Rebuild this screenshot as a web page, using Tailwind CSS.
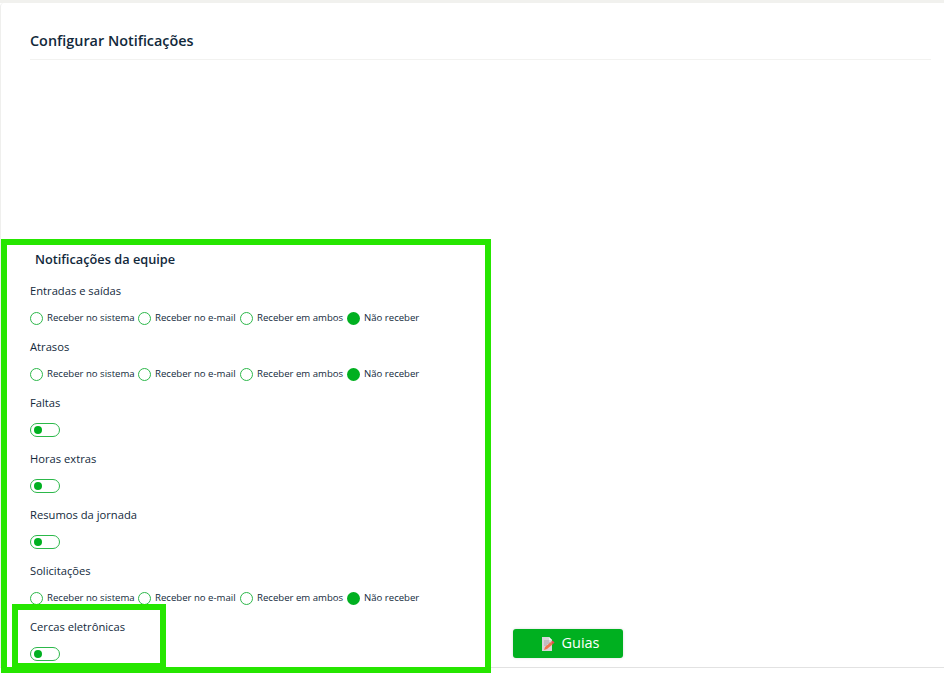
<!DOCTYPE html>
<html lang="pt-BR">
<head>
    <meta charset="UTF-8">
    <meta name="viewport" content="width=device-width, initial-scale=1.0">
    <script src="https://cdn.jsdelivr.net/npm/@tailwindcss/browser@4"></script>
    <title>Configurar Notificações</title>
</head>
<body class="bg-white font-['Open_Sans',sans-serif] text-[#12293b] overflow-hidden">
<div class="relative w-[944px] h-[675px] overflow-hidden">
    <div class="h-[3px] bg-[#f1f1ee]"></div>

    <!-- Card -->
    <div class="h-[665px] border-l border-b border-l-[#efefed] border-b-[#e2e2e2] rounded-tl-[4px] pl-[29px] pr-[13px] pt-[27px]">
        <h2 class="h-[30px] border-b border-[#f2f2f0] text-[14.4px] leading-[22px] font-semibold">Configurar Notificações</h2>

        <div class="flex h-[607px]">
            <div class="w-[483px] pt-[189px]">
                <h3 class="pl-[5px] text-[12.75px] leading-[20px] font-semibold">Notificações da equipe</h3>

                <div class="mt-[14px] flex flex-col">
                    <!-- Entradas e saídas -->
                    <div class="h-[56px]">
                        <p class="text-[11.2px] leading-[16px] h-[16px]">Entradas e saídas</p>
                        <div class="mt-[11px] flex items-center h-[16px] text-[9.6px]">
                            <span class="w-[13px] h-[13px] rounded-full border-[1.3px] border-[#2cb84a]"></span><span class="ml-[4px] w-[91px]">Receber no sistema</span>
                            <span class="w-[13px] h-[13px] rounded-full border-[1.3px] border-[#2cb84a]"></span><span class="ml-[4px] w-[85px]">Receber no e-mail</span>
                            <span class="w-[13px] h-[13px] rounded-full border-[1.3px] border-[#2cb84a]"></span><span class="ml-[4px] w-[90px]">Receber em ambos</span>
                            <span class="w-[13px] h-[13px] rounded-full bg-[#00b020]"></span><span class="ml-[4px]">Não receber</span>
                        </div>
                    </div>
                    <!-- Atrasos -->
                    <div class="h-[56px]">
                        <p class="text-[11.2px] leading-[16px] h-[16px]">Atrasos</p>
                        <div class="mt-[11px] flex items-center h-[16px] text-[9.6px]">
                            <span class="w-[13px] h-[13px] rounded-full border-[1.3px] border-[#2cb84a]"></span><span class="ml-[4px] w-[91px]">Receber no sistema</span>
                            <span class="w-[13px] h-[13px] rounded-full border-[1.3px] border-[#2cb84a]"></span><span class="ml-[4px] w-[85px]">Receber no e-mail</span>
                            <span class="w-[13px] h-[13px] rounded-full border-[1.3px] border-[#2cb84a]"></span><span class="ml-[4px] w-[90px]">Receber em ambos</span>
                            <span class="w-[13px] h-[13px] rounded-full bg-[#00b020]"></span><span class="ml-[4px]">Não receber</span>
                        </div>
                    </div>
                    <!-- Faltas -->
                    <div class="h-[56px]">
                        <p class="text-[11.2px] leading-[16px] h-[16px]">Faltas</p>
                        <div class="mt-[12px] flex items-center w-[30px] h-[14px] rounded-full border-[1.3px] border-[#2cb84a] pl-[3px]">
                            <span class="w-[8px] h-[8px] rounded-full bg-[#00b020]"></span>
                        </div>
                    </div>
                    <!-- Horas extras -->
                    <div class="h-[56px]">
                        <p class="text-[11.2px] leading-[16px] h-[16px]">Horas extras</p>
                        <div class="mt-[12px] flex items-center w-[30px] h-[14px] rounded-full border-[1.3px] border-[#2cb84a] pl-[3px]">
                            <span class="w-[8px] h-[8px] rounded-full bg-[#00b020]"></span>
                        </div>
                    </div>
                    <!-- Resumos da jornada -->
                    <div class="h-[56px]">
                        <p class="text-[11.2px] leading-[16px] h-[16px]">Resumos da jornada</p>
                        <div class="mt-[12px] flex items-center w-[30px] h-[14px] rounded-full border-[1.3px] border-[#2cb84a] pl-[3px]">
                            <span class="w-[8px] h-[8px] rounded-full bg-[#00b020]"></span>
                        </div>
                    </div>
                    <!-- Solicitações -->
                    <div class="h-[56px]">
                        <p class="text-[11.2px] leading-[16px] h-[16px]">Solicitações</p>
                        <div class="mt-[11px] flex items-center h-[16px] text-[9.6px]">
                            <span class="w-[13px] h-[13px] rounded-full border-[1.3px] border-[#2cb84a]"></span><span class="ml-[4px] w-[91px]">Receber no sistema</span>
                            <span class="w-[13px] h-[13px] rounded-full border-[1.3px] border-[#2cb84a]"></span><span class="ml-[4px] w-[85px]">Receber no e-mail</span>
                            <span class="w-[13px] h-[13px] rounded-full border-[1.3px] border-[#2cb84a]"></span><span class="ml-[4px] w-[90px]">Receber em ambos</span>
                            <span class="w-[13px] h-[13px] rounded-full bg-[#00b020]"></span><span class="ml-[4px]">Não receber</span>
                        </div>
                    </div>
                    <!-- Cercas eletrônicas -->
                    <div class="h-[40px]">
                        <p class="text-[11.2px] leading-[16px] h-[16px]">Cercas eletrônicas</p>
                        <div class="mt-[12px] flex items-center w-[30px] h-[14px] rounded-full border-[1.3px] border-[#2cb84a] pl-[3px]">
                            <span class="w-[8px] h-[8px] rounded-full bg-[#00b020]"></span>
                        </div>
                    </div>
                </div>
            </div>

            <!-- Guias button -->
            <button class="self-end mb-[9px] w-[110px] h-[29px] pb-[2px] pl-[5px] rounded-[3px] bg-[#00b020] shadow-[0_0_3px_rgba(0,0,0,0.15)] text-white text-[14.5px] flex items-center justify-center gap-[6px]">
                <svg class="mt-[2px]" width="14" height="16" viewBox="0 0 14 16">
                    <path d="M1 1h7l3 3v11H1z" fill="#d9d5d8"/>
                    <path d="M8 1l3 3H8z" fill="#f3f1f2"/>
                    <path d="M3 5h5M3 7h6M3 9h3" stroke="#a9a4a8" stroke-width="1"/>
                    <path d="M3 14l1-3 6-5 2 2-6 5z" fill="#f2734c"/>
                    <path d="M10 6l1.5-1.5 2 2L12 8z" fill="#e5484d"/>
                </svg>
                Guias
            </button>
        </div>
    </div>

    <!-- Green highlight frames drawn over the screenshot -->
    <div class="absolute left-[1px] top-[239px] w-[490px] h-[434px] border-[6px] border-[#26e600]"></div>
    <div class="absolute left-[12px] top-[604px] w-[154px] h-[65px] border-[6px] border-[#26e600]"></div>
</div>
</body>
</html>
